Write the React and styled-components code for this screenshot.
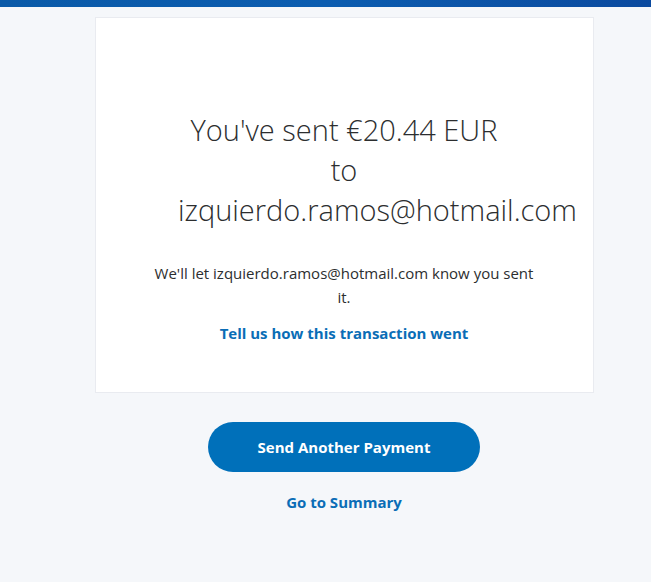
import styled, { createGlobalStyle } from "styled-components";

const GlobalStyle = createGlobalStyle`
  body {
    margin: 0;
    background: #f5f7fa;
    font-family: "Open Sans", "Noto Sans", sans-serif;
    color: #2c2e2f;
  }
`;

const TopBar = styled.div`
  height: 7px;
  background: linear-gradient(90deg, #0a5aa8, #0c5db0 50%, #0b4a9f);
`;

const Page = styled.div`
  display: flex;
  flex-direction: column;
  align-items: center;
  padding: 10px 0 0 37px;
  min-height: 565px;
`;

const Card = styled.div`
  box-sizing: border-box;
  width: 499px;
  height: 376px;
  background: #fff;
  border: 1px solid #e9ebf0;
  display: flex;
  flex-direction: column;
  align-items: center;
  padding-top: 92px;
`;

const Headline = styled.h1`
  width: 332px;
  margin: 0;
  font-size: 29px;
  font-weight: 300;
  line-height: 40px;
  text-align: center;
  color: #2c2e2f;
`;

const Note = styled.p`
  width: 390px;
  margin: 31px 0 0;
  font-size: 15px;
  line-height: 24px;
  text-align: center;
  color: #2c2e2f;
`;

const TextLink = styled.a`
  display: block;
  margin-top: ${(p) => p.$top || 0}px;
  font-size: 15px;
  font-weight: 700;
  line-height: 24px;
  color: #0a6db6;
  text-decoration: none;
  cursor: pointer;
`;

const Button = styled.button`
  margin-top: 29px;
  width: 272px;
  height: 50px;
  border: none;
  border-radius: 25px;
  background: #0070ba;
  color: #fff;
  font-family: inherit;
  font-size: 15px;
  font-weight: 700;
  cursor: pointer;
`;

export default function App() {
  return (
    <>
      <GlobalStyle />
      <TopBar />
      <Page>
        <Card>
          <Headline>
            You've sent €20.44 EUR to izquierdo.ramos@hotmail.com
          </Headline>
          <Note>We'll let izquierdo.ramos@hotmail.com know you sent it.</Note>
          <TextLink $top={12}>Tell us how this transaction went</TextLink>
        </Card>
        <Button>Send Another Payment</Button>
        <TextLink $top={18}>Go to Summary</TextLink>
      </Page>
    </>
  );
}
